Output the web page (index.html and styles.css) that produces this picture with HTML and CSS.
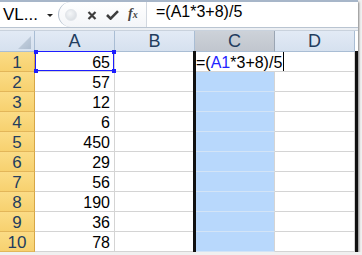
FILE: index.html
```html
<!DOCTYPE html>
<html lang="en">
<head>
    <meta charset="UTF-8">
    <title>Formula</title>
    <link rel="stylesheet" href="styles.css">
</head>
<body>
    <div class="window">
        <!-- Formula bar -->
        <div class="formula-bar">
            <div class="name-box">
                <span class="name">VL...</span>
                <span class="arrow"></span>
            </div>
            <div class="fx-buttons">
                <span class="grip"></span>
                <svg class="btn-x" width="10" height="9" viewBox="0 0 10 9">
                    <path d="M1.5 1 L8.5 8 M8.5 1 L1.5 8" stroke="#3d3d3d" stroke-width="2.2" fill="none"/>
                </svg>
                <svg class="btn-check" width="13" height="10" viewBox="0 0 13 10">
                    <path d="M1 5 L4.6 8.6 L12 1.2" stroke="#3d3d3d" stroke-width="2.6" fill="none"/>
                </svg>
                <span class="btn-fx">f<span class="sub">x</span></span>
            </div>
            <div class="formula-input">=(A1*3+8)/5</div>
        </div>
        <div class="bar-gap"></div>

        <!-- Sheet -->
        <div class="sheet">
            <div class="corner"><span class="tri"></span></div>
            <div class="col-head">A</div>
            <div class="col-head">B</div>
            <div class="col-head active">C</div>
            <div class="col-head">D</div>

            <div class="row-head">1</div>
            <div class="cell num a1">65<span class="range"><i class="h tl"></i><i class="h tr"></i><i class="h bl"></i><i class="h br"></i></span></div>
            <div class="cell"></div>
            <div class="cell c1"><span class="edit">=(<span class="ref">A1</span>*3+8)/5<i class="caret"></i></span></div>
            <div class="cell"></div>

            <div class="row-head">2</div>
            <div class="cell num">57</div>
            <div class="cell"></div>
            <div class="cell sel"></div>
            <div class="cell"></div>

            <div class="row-head">3</div>
            <div class="cell num">12</div>
            <div class="cell"></div>
            <div class="cell sel"></div>
            <div class="cell"></div>

            <div class="row-head">4</div>
            <div class="cell num">6</div>
            <div class="cell"></div>
            <div class="cell sel"></div>
            <div class="cell"></div>

            <div class="row-head">5</div>
            <div class="cell num">450</div>
            <div class="cell"></div>
            <div class="cell sel"></div>
            <div class="cell"></div>

            <div class="row-head">6</div>
            <div class="cell num">29</div>
            <div class="cell"></div>
            <div class="cell sel"></div>
            <div class="cell"></div>

            <div class="row-head">7</div>
            <div class="cell num">56</div>
            <div class="cell"></div>
            <div class="cell sel"></div>
            <div class="cell"></div>

            <div class="row-head">8</div>
            <div class="cell num">190</div>
            <div class="cell"></div>
            <div class="cell sel"></div>
            <div class="cell"></div>

            <div class="row-head">9</div>
            <div class="cell num">36</div>
            <div class="cell"></div>
            <div class="cell sel"></div>
            <div class="cell"></div>

            <div class="row-head">10</div>
            <div class="cell num">78</div>
            <div class="cell"></div>
            <div class="cell sel"></div>
            <div class="cell"></div>

            <!-- copied column outline -->
            <div class="col-sel"></div>
        </div>
    </div>
</body>
</html>
```

FILE: styles.css
```css
/* Page */
body {
    margin: 0;
    background-color: #f0f0f0;
    font-family: "Liberation Sans", Arial, sans-serif;
}

.window {
    width: 358px;
    height: 252px;
    background-color: white;
    box-shadow: 1px 2px 2px rgba(0, 0, 0, 0.45);
    overflow: hidden;
}

/* Formula bar */
.formula-bar {
    display: flex;
    height: 28px;
    box-sizing: border-box;
    border-top: 2px solid #a7b6c9;
    border-bottom: 1px solid #b9c4d1;
    background-color: white;
}

.name-box {
    width: 58px;
    display: flex;
    align-items: center;
    font-size: 17px;
    line-height: 25px;
    color: #000;
}

.name-box .name {
    margin-left: 3px;
}

.name-box .arrow {
    margin-left: 9px;
    margin-top: 1px;
    width: 0;
    height: 0;
    border-left: 3px solid transparent;
    border-right: 3px solid transparent;
    border-top: 3px solid #222;
}

.fx-buttons {
    width: 87px;
    display: flex;
    align-items: center;
    border-left: 1px solid #b3bfcd;
    border-radius: 13px 0 0 13px;
    background: linear-gradient(#ffffff, #f3f5f8);
}

.grip {
    width: 10px;
    height: 10px;
    margin-left: 6px;
    border-radius: 50%;
    background: radial-gradient(circle at 40% 35%, #f4f6f8, #d3d8de);
    border: 1px solid #e1e5ea;
}

.btn-x {
    margin-left: 10px;
    margin-top: 1px;
}

.btn-check {
    margin-left: 9px;
}

.btn-fx {
    margin-left: 9px;
    font-family: "Liberation Serif", "Times New Roman", serif;
    font-style: italic;
    font-weight: bold;
    font-size: 14px;
    color: #444;
    line-height: 14px;
}

.btn-fx .sub {
    font-size: 10px;
}

.formula-input {
    flex: 1;
    border-left: 1px solid #d2d8e0;
    padding-left: 9px;
    font-size: 16px;
    line-height: 19px;
    color: #000;
    white-space: nowrap;
}

.bar-gap {
    height: 3px;
    box-sizing: border-box;
    background-color: #eceff3;
    border-bottom: 1px solid #c9d2dd;
}

/* Sheet grid */
.sheet {
    position: relative;
    display: grid;
    grid-template-columns: 35px repeat(4, 80px);
    grid-template-rows: 21px repeat(10, 20px);
}

.corner,
.col-head {
    box-sizing: border-box;
    background: linear-gradient(#e2eaf5, #d6e1ef);
    border-right: 1px solid #a9bdd4;
    border-bottom: 1px solid #a9bdd4;
}

.corner {
    display: flex;
    justify-content: flex-end;
    align-items: flex-end;
    padding: 0 3px 2px 0;
}

.corner .tri {
    width: 13px;
    height: 13px;
    background: linear-gradient(135deg, #cbd6e3, #aebdcf);
    clip-path: polygon(100% 0, 100% 100%, 0 100%);
}

.col-head {
    text-align: center;
    font-size: 18px;
    line-height: 20px;
    color: #233d5e;
}

.col-head.active {
    background: linear-gradient(#cdd2d9, #c1c6ce);
    border-right-color: #9aa5b3;
}

.row-head {
    box-sizing: border-box;
    background: linear-gradient(#fbdc86, #f7d16f);
    border-right: 1px solid #d6a646;
    border-bottom: 1px solid #e3b659;
    text-align: center;
    font-size: 17px;
    line-height: 17px;
    padding-top: 2px;
    color: #233d5e;
}

.cell {
    box-sizing: border-box;
    border-right: 1px solid #d4d4d4;
    border-bottom: 1px solid #d4d4d4;
    font-size: 16px;
    line-height: 17px;
    padding-top: 2px;
    color: #000;
}

.cell.num {
    text-align: right;
    padding-right: 4px;
}

.cell.sel {
    background-color: #b8d8fc;
    border-bottom-color: #d3e4f6;
}

/* A1 reference outline */
.a1 {
    position: relative;
}

.range {
    position: absolute;
    top: -1px;
    left: 0;
    right: 0;
    bottom: 0;
    border: 1px solid #1d1dff;
    z-index: 2;
}

.range .h {
    position: absolute;
    width: 4px;
    height: 4px;
    background-color: #1d1dff;
}

.range .tl { left: -2px; top: -2px; }
.range .tr { right: -3px; top: -2px; }
.range .bl { left: -2px; bottom: -3px; }
.range .br { right: -3px; bottom: -3px; }

/* C1 in edit mode */
.c1 {
    white-space: nowrap;
    overflow: visible;
    padding-left: 1px;
}

.edit {
    position: relative;
    z-index: 3;
    display: inline-block;
    background-color: white;
    height: 19px;
    margin-top: -2px;
    padding-top: 2px;
    padding-right: 1px;
    box-sizing: border-box;
}

.edit .ref {
    color: #2323ff;
}

.edit .caret {
    display: inline-block;
    width: 1px;
    height: 19px;
    background-color: #000;
    vertical-align: top;
    margin-top: -2px;
    margin-left: 1px;
}

/* copied column outline, laid over column C */
.col-sel {
    position: absolute;
    grid-column: 4;
    grid-row: 2 / 12;
    top: -1px;
    bottom: 0;
    left: -2px;
    right: 0;
    z-index: 1;
    border-left: 3px solid #111;
    border-right: 3px solid #111;
}
```
